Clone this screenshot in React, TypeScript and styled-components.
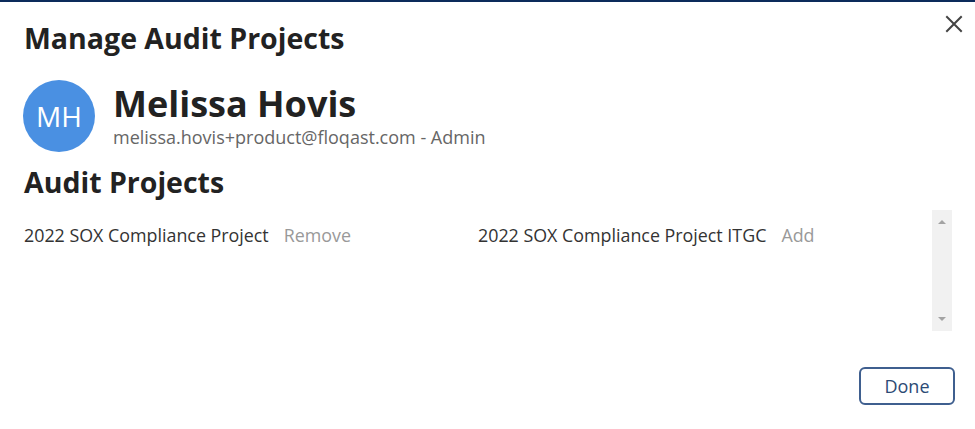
import React from 'react';
import styled, { createGlobalStyle } from 'styled-components';

const GlobalStyle = createGlobalStyle`
    html, body {
        margin: 0;
        padding: 0;
        background: #ffffff;
    }
    body {
        font-family: 'Open Sans', 'Noto Sans', sans-serif;
        color: #222;
    }
`;

const Modal = styled.div`
    position: relative;
    width: 975px;
    height: 429px;
    box-sizing: border-box;
    border-top: 2px solid #0c2b5b;
    padding: 18px 20px 0 24px;
    display: flex;
    flex-direction: column;
`;

const CloseButton = styled.button`
    position: absolute;
    top: 12px;
    right: 11px;
    width: 20px;
    height: 20px;
    padding: 0;
    border: none;
    background: none;
    cursor: pointer;
    color: #444;
    display: flex;
    align-items: center;
    justify-content: center;
`;

const Title = styled.h1`
    margin: 0;
    font-size: 28.5px;
    font-weight: 700;
    line-height: 36px;
    color: #222;
`;

const UserRow = styled.div`
    display: flex;
    align-items: flex-start;
    gap: 18px;
    margin-top: 24px;
    margin-left: -1px;
`;

const Avatar = styled.div`
    width: 72px;
    height: 72px;
    border-radius: 50%;
    background: #4a90e2;
    color: #fff;
    font-size: 28px;
    display: flex;
    align-items: center;
    justify-content: center;
    flex-shrink: 0;
`;

const UserInfo = styled.div`
    display: flex;
    flex-direction: column;
    margin-top: 3px;
`;

const UserName = styled.div`
    font-size: 36px;
    font-weight: 700;
    line-height: 42px;
    color: #222;
`;

const UserEmail = styled.div`
    font-size: 18px;
    line-height: 24px;
    color: #666;
`;

const SectionTitle = styled.h2`
    margin: 12px 0 0;
    font-size: 28.5px;
    font-weight: 700;
    line-height: 36px;
    color: #222;
`;

const ListBox = styled.div`
    display: flex;
    margin: 10px 3px 0 0;
    height: 121px;
`;

const ProjectGrid = styled.div`
    flex: 1;
    display: grid;
    grid-template-columns: 1fr 1fr;
    align-content: start;
    padding-top: 13px;
`;

const ProjectItem = styled.div`
    display: flex;
    align-items: baseline;
    gap: 15px;
    font-size: 17.85px;
    line-height: 24px;
    color: #333;
`;

const ItemAction = styled.button`
    border: none;
    background: none;
    padding: 0;
    font-family: inherit;
    font-size: 17.85px;
    color: #999;
    cursor: pointer;
`;

const ScrollTrack = styled.div`
    width: 20px;
    background: #f1f1f1;
    display: flex;
    flex-direction: column;
    justify-content: space-between;
    align-items: center;
    padding: 10px 0;
    box-sizing: border-box;
`;

const Arrow = styled.div<{ up?: boolean }>`
    width: 0;
    height: 0;
    border-left: 4px solid transparent;
    border-right: 4px solid transparent;
    ${(props) => (props.up ? 'border-bottom: 4px solid #a3a3a3;' : 'border-top: 4px solid #a3a3a3;')}
`;

const Footer = styled.div`
    display: flex;
    justify-content: flex-end;
    margin-top: 36px;
`;

const DoneButton = styled.button`
    width: 96px;
    height: 38px;
    border: 2px solid #3f5f8f;
    border-radius: 6px;
    background: #fff;
    color: #2c4a75;
    font-family: inherit;
    font-size: 18px;
    cursor: pointer;
`;

const projects = [
    { name: '2022 SOX Compliance Project', action: 'Remove' },
    { name: '2022 SOX Compliance Project ITGC', action: 'Add' },
];

const App: React.FC = () => {
    return (
        <>
            <GlobalStyle />
            <Modal>
                <CloseButton aria-label='Close'>
                    <svg width='18' height='18' viewBox='0 0 18 18'>
                        <path d='M2 2 L16 16 M16 2 L2 16' stroke='currentColor' strokeWidth='2' strokeLinecap='square' />
                    </svg>
                </CloseButton>
                <Title>Manage Audit Projects</Title>
                <UserRow>
                    <Avatar>MH</Avatar>
                    <UserInfo>
                        <UserName>Melissa Hovis</UserName>
                        <UserEmail>melissa.hovis+product@floqast.com - Admin</UserEmail>
                    </UserInfo>
                </UserRow>
                <SectionTitle>Audit Projects</SectionTitle>
                <ListBox>
                    <ProjectGrid>
                        {projects.map((p) => (
                            <ProjectItem key={p.name}>
                                {p.name}
                                <ItemAction>{p.action}</ItemAction>
                            </ProjectItem>
                        ))}
                    </ProjectGrid>
                    <ScrollTrack>
                        <Arrow up />
                        <Arrow />
                    </ScrollTrack>
                </ListBox>
                <Footer>
                    <DoneButton>Done</DoneButton>
                </Footer>
            </Modal>
        </>
    );
};

export default App;
